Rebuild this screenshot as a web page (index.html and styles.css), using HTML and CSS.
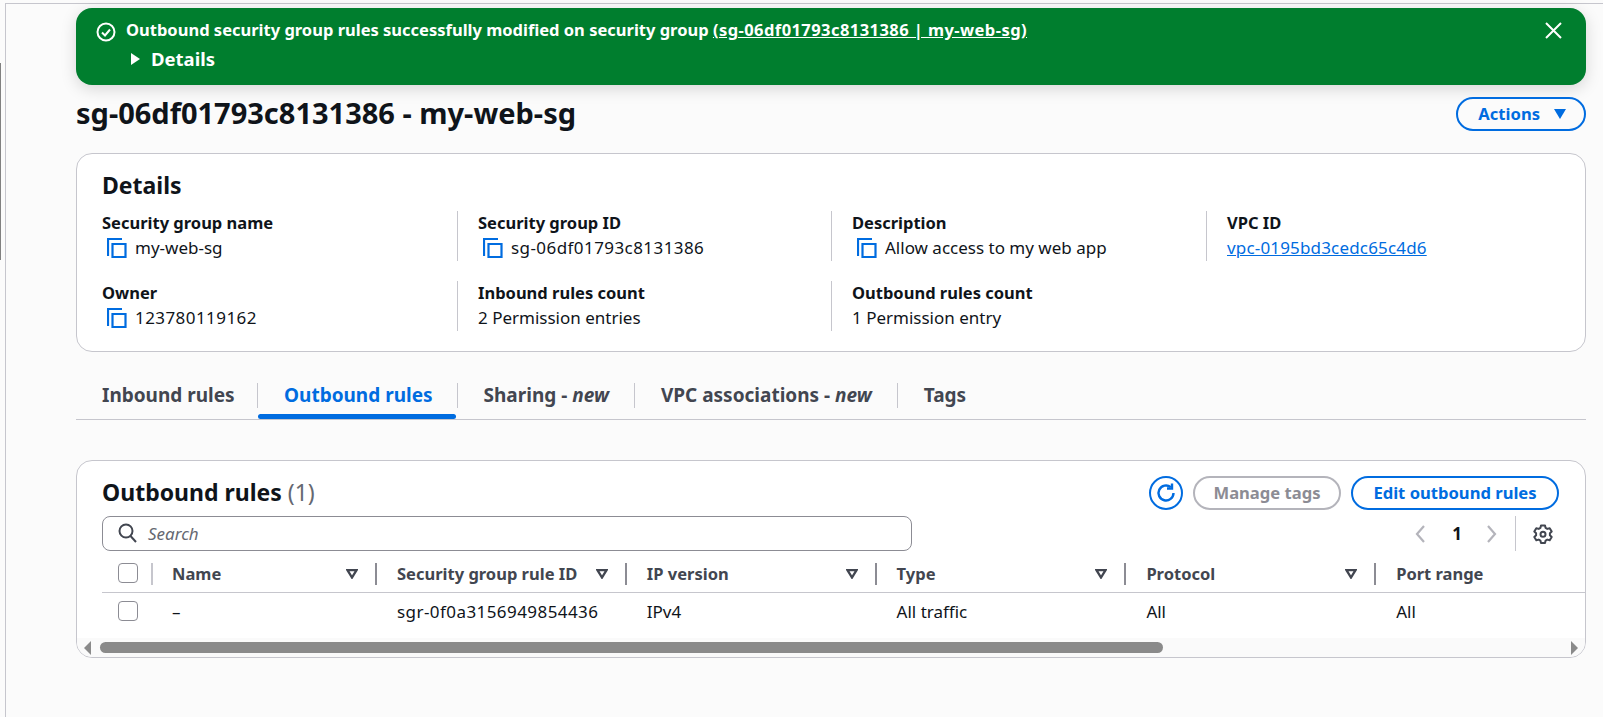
FILE: index.html
```html
<!DOCTYPE html>
<html lang="en">
<head>
  <meta charset="UTF-8">
  <title>sg-06df01793c8131386 - my-web-sg</title>
  <link rel="stylesheet" href="styles.css">
</head>
<body>
  <div class="edge-mark"></div>
  <div class="frame">
    <main class="content">
      <div class="flash">
        <svg class="flash-icon" width="20" height="20" viewBox="0 0 20 20"><circle cx="10" cy="10" r="8.500" fill="none" stroke="#fff" stroke-width="2"/><path d="M6 10.500l3 3 5-6" fill="none" stroke="#fff" stroke-width="2"/></svg>
        <div class="flash-body">
          <div class="flash-title">Outbound security group rules successfully modified on security group <a class="num" href="#">(sg-06df01793c8131386 | my-web-sg)</a></div>
          <div class="flash-details"><span class="caret-right"></span>Details</div>
        </div>
        <svg class="flash-close" width="17" height="17" viewBox="0 0 17 17"><path d="M1 1l15 15M16 1L1 16" fill="none" stroke="#fff" stroke-width="2"/></svg>
      </div>

      <div class="page-head">
        <h1>sg-06df01793c8131386 - my-web-sg</h1>
        <button class="btn btn-actions">Actions <span class="caret-down"></span></button>
      </div>

      <section class="card details">
        <h2>Details</h2>
        <div class="details-grid">
          <div class="field">
            <div class="label">Security group name</div>
            <div class="value"><svg class="copy" width="20" height="20" viewBox="0 0 20 20"><path d="M1 18V1h14M5.500 6h13v13h-13z" fill="none" stroke="#006ce0" stroke-width="2.200"/></svg>my-web-sg</div>
          </div>
          <div class="field">
            <div class="label">Security group ID</div>
            <div class="value"><svg class="copy" width="20" height="20" viewBox="0 0 20 20"><path d="M1 18V1h14M5.500 6h13v13h-13z" fill="none" stroke="#006ce0" stroke-width="2.200"/></svg><span class="num">sg-06df01793c8131386</span></div>
          </div>
          <div class="field">
            <div class="label">Description</div>
            <div class="value"><svg class="copy" width="20" height="20" viewBox="0 0 20 20"><path d="M1 18V1h14M5.500 6h13v13h-13z" fill="none" stroke="#006ce0" stroke-width="2.200"/></svg>Allow access to my web app</div>
          </div>
          <div class="field">
            <div class="label">VPC ID</div>
            <div class="value"><a href="#">vpc-0195bd3cedc65c4d6</a></div>
          </div>
          <div class="field">
            <div class="label">Owner</div>
            <div class="value"><svg class="copy" width="20" height="20" viewBox="0 0 20 20"><path d="M1 18V1h14M5.500 6h13v13h-13z" fill="none" stroke="#006ce0" stroke-width="2.200"/></svg><span class="num">123780119162</span></div>
          </div>
          <div class="field">
            <div class="label">Inbound rules count</div>
            <div class="value">2 Permission entries</div>
          </div>
          <div class="field">
            <div class="label">Outbound rules count</div>
            <div class="value">1 Permission entry</div>
          </div>
        </div>
      </section>

      <nav class="tabs">
        <a class="tab tab-inbound">Inbound rules</a>
        <a class="tab active">Outbound rules</a>
        <a class="tab">Sharing - <em>new</em></a>
        <a class="tab">VPC associations - <em>new</em></a>
        <a class="tab">Tags</a>
      </nav>

      <section class="card rules">
        <div class="rules-head">
          <h2>Outbound rules <span class="count">(1)</span></h2>
          <div class="rules-actions">
            <button class="btn btn-icon"><svg width="22" height="22" viewBox="0 0 22 22"><path d="M18.500 11a7.500 7.500 0 1 1-2.700-5.800" fill="none" stroke="#006ce0" stroke-width="2.400"/><path d="M17 1.500v5h-5" fill="none" stroke="#006ce0" stroke-width="2.400"/></svg></button>
            <button class="btn btn-disabled">Manage tags</button>
            <button class="btn btn-edit">Edit outbound rules</button>
          </div>
        </div>
        <div class="filter-row">
          <div class="search">
            <svg width="19" height="20" viewBox="0 0 19 20"><circle cx="8" cy="8" r="6.500" fill="none" stroke="#424650" stroke-width="2"/><path d="M12.500 13l5.500 6" fill="none" stroke="#424650" stroke-width="2"/></svg>
            <span>Search</span>
          </div>
          <div class="pager">
            <svg width="12" height="20" viewBox="0 0 12 20"><path d="M10 2L3 10l7 8" fill="none" stroke="#b4b4bb" stroke-width="2.200"/></svg>
            <span class="page-num">1</span>
            <svg width="12" height="20" viewBox="0 0 12 20"><path d="M2 2l7 8-7 8" fill="none" stroke="#b4b4bb" stroke-width="2.200"/></svg>
          </div>
          <div class="prefs">
            <svg width="20" height="20" viewBox="0 0 20 20"><path d="M8 1.500h4l.6 2.400 1.700 1 2.400-.7 2 3.400-1.800 1.700v1.900l1.800 1.700-2 3.400-2.400-.7-1.700 1-.6 2.400H8l-.6-2.400-1.700-1-2.400.7-2-3.400 1.800-1.700V9.300L1.300 7.600l2-3.400 2.400.7 1.700-1z" fill="none" stroke="#424650" stroke-width="2" stroke-linejoin="round"/><circle cx="10" cy="10.200" r="2.500" fill="none" stroke="#424650" stroke-width="2"/></svg>
          </div>
        </div>
        <div class="table-wrap">
          <table>
            <colgroup>
              <col class="col-check"><col class="col-name"><col class="col-wide"><col class="col-wide"><col class="col-wide"><col class="col-wide"><col class="col-wide">
            </colgroup>
            <thead>
              <tr>
                <th class="cell-check"><span class="checkbox"></span></th>
                <th><div class="th-in">Name<svg class="sort" width="12" height="10" viewBox="0 0 12 10"><path d="M1.500 1.200h9L6 8.500z" fill="#fff" stroke="#424650" stroke-width="2.300"/></svg></div></th>
                <th><div class="th-in">Security group rule ID<svg class="sort" width="12" height="10" viewBox="0 0 12 10"><path d="M1.500 1.200h9L6 8.500z" fill="#fff" stroke="#424650" stroke-width="2.300"/></svg></div></th>
                <th><div class="th-in">IP version<svg class="sort" width="12" height="10" viewBox="0 0 12 10"><path d="M1.500 1.200h9L6 8.500z" fill="#fff" stroke="#424650" stroke-width="2.300"/></svg></div></th>
                <th><div class="th-in">Type<svg class="sort" width="12" height="10" viewBox="0 0 12 10"><path d="M1.500 1.200h9L6 8.500z" fill="#fff" stroke="#424650" stroke-width="2.300"/></svg></div></th>
                <th><div class="th-in">Protocol<svg class="sort" width="12" height="10" viewBox="0 0 12 10"><path d="M1.500 1.200h9L6 8.500z" fill="#fff" stroke="#424650" stroke-width="2.300"/></svg></div></th>
                <th><div class="th-in">Port range</div></th>
              </tr>
            </thead>
            <tbody>
              <tr>
                <td class="cell-check"><span class="checkbox"></span></td>
                <td>–</td>
                <td><span class="num">sgr-0f0a3156949854436</span></td>
                <td>IPv4</td>
                <td>All traffic</td>
                <td>All</td>
                <td>All</td>
              </tr>
            </tbody>
          </table>
        </div>
        <div class="scrollbar">
          <span class="arrow-left"></span>
          <div class="track"><div class="thumb"></div></div>
          <span class="arrow-right"></span>
        </div>
      </section>
    </main>
  </div>
</body>
</html>
```
FILE: styles.css
```css
* {
  box-sizing: border-box;
}
html, body {
  margin: 0;
  height: 717px;
  overflow: hidden;
}
body {
  font-family: "Noto Sans", Arial, sans-serif;
  font-size: 17px;
  color: #0f141a;
  background-color: #fbfbfb;
  padding-top: 3px;
  position: relative;
}
.edge-mark {
  position: absolute;
  left: 0;
  top: 63px;
  width: 1px;
  height: 197px;
  background-color: #808080;
}
.frame {
  margin-left: 5px;
  height: 714px;
  border-left: 1px solid #c6c6cd;
  border-top: 1px solid #c6c6cd;
}
.content {
  margin-left: 70px;
  width: 1510px;
  padding-top: 4px;
}
a {
  color: inherit;
}
.num {
  letter-spacing: 0.43px;
}
.flash {
  display: flex;
  height: 77px;
  padding: 11px 24px 11px 20px;
  background-color: #007e2e;
  color: #fff;
  border-radius: 16px;
  box-shadow: 0 4px 16px rgba(0, 0, 0, 0.15);
  font-weight: 700;
}
.flash-icon {
  margin: 3px 10px 0 0;
  flex: none;
}
.flash-body {
  flex: 1;
}
.flash-title {
  font-size: 16.5px;
  line-height: 22px;
}
.flash-details {
  display: flex;
  align-items: center;
  font-size: 18.5px;
  line-height: 22px;
  margin-top: 7px;
}
.caret-right {
  width: 0;
  height: 0;
  margin: 0 11px 0 5px;
  border-left: 9px solid #fff;
  border-top: 6px solid transparent;
  border-bottom: 6px solid transparent;
}
.flash-close {
  margin-top: 3px;
}
.page-head {
  display: flex;
  align-items: center;
  justify-content: space-between;
  height: 68px;
  padding-bottom: 10px;
}
h1 {
  margin: 0 0 3px;
  font-size: 29px;
  font-weight: 700;
}
.btn {
  height: 34px;
  padding: 0 20px 2px;
  border: 2px solid #006ce0;
  border-radius: 17px;
  background-color: #fff;
  color: #006ce0;
  font-family: inherit;
  font-size: 16.6px;
  font-weight: 700;
}
.btn-actions {
  display: flex;
  align-items: center;
  gap: 14px;
  padding-right: 18px;
  background-color: #fbfbfb;
}
.caret-down {
  width: 0;
  height: 0;
  margin-top: 2px;
  border-top: 10px solid #006ce0;
  border-left: 6.5px solid transparent;
  border-right: 6.5px solid transparent;
}
.card {
  background-color: #fff;
  border: 1px solid #c6c6cd;
  border-radius: 16px;
}
.details {
  height: 199px;
  padding: 18px 25px;
}
h2 {
  margin: 0;
  font-size: 23px;
  line-height: 26px;
  font-weight: 700;
}
.details-grid {
  display: grid;
  grid-template-columns: 355px 374px 375px 1fr;
  grid-auto-rows: 50px;
  row-gap: 20px;
  margin-top: 13px;
}
.field {
  border-left: 1px solid #c6c6cd;
  padding-left: 20px;
}
.field:nth-child(4n+1) {
  border-left: none;
  padding-left: 0;
}
.label {
  font-size: 16.5px;
  font-weight: 700;
  line-height: 24px;
}
.value {
  display: flex;
  align-items: center;
  line-height: 26px;
}
.value a {
  color: #006ce0;
  letter-spacing: 0.17px;
}
.copy {
  margin: 0 8px 0 5px;
  flex: none;
}
.tabs {
  display: flex;
  margin-top: 30px;
  height: 38px;
  border-bottom: 1px solid #c6c6cd;
  font-size: 19px;
  font-weight: 700;
  color: #424650;
}
.tab {
  position: relative;
  padding: 0 25px 0 26px;
  height: 25px;
  margin-top: 1px;
  line-height: 25px;
  border-left: 1px solid #c6c6cd;
}
.tab-inbound {
  width: 181px;
  flex: none;
  padding: 0 0 0 26px;
  border-left: none;
}
.tab.active {
  padding-right: 24px;
  color: #006ce0;
}
.tab.active::after {
  content: "";
  position: absolute;
  left: 0;
  right: 1px;
  top: 31px;
  height: 5px;
  background-color: #006ce0;
  border-radius: 3px;
}
.rules {
  margin-top: 40px;
  height: 198px;
  overflow: hidden;
}
.rules-head {
  display: flex;
  justify-content: space-between;
  align-items: center;
  height: 34px;
  margin: 15px 26px 0 25px;
}
.rules-head h2 {
  margin-bottom: 2px;
}
.count {
  font-weight: 400;
  color: #656871;
}
.rules-actions {
  display: flex;
  gap: 10px;
}
.btn-icon {
  width: 34px;
  padding: 0;
  display: flex;
  align-items: center;
  justify-content: center;
}
.btn-disabled {
  width: 148px;
  padding: 0 0 2px;
  border-color: #b4b4bb;
  color: #8c8c94;
}
.btn-edit {
  width: 208px;
  padding: 0 0 2px;
}
.filter-row {
  display: flex;
  align-items: center;
  height: 35px;
  margin: 6px 26px 0 25px;
}
.search {
  display: flex;
  align-items: center;
  gap: 11px;
  width: 810px;
  height: 35px;
  padding: 0 0 1px 15px;
  border: 1px solid #8c8c94;
  border-radius: 8px;
  font-style: italic;
  color: #656871;
}
.pager {
  display: flex;
  align-items: center;
  gap: 24px;
  margin-left: auto;
}
.pager svg:first-child {
  margin-right: 2px;
}
.page-num {
  font-weight: 700;
}
.prefs {
  display: flex;
  align-items: center;
  height: 35px;
  margin-left: 17px;
  padding: 0 6px 0 17px;
  border-left: 1px solid #c6c6cd;
}
.table-wrap {
  margin: 10px 0 0 25px;
  height: 77px;
  overflow: hidden;
}
table {
  table-layout: fixed;
  border-collapse: separate;
  border-spacing: 0;
  width: 1524px;
}
.col-check {
  width: 49px;
}
.col-name {
  width: 226px;
}
.col-wide {
  width: 249.75px;
}
th {
  height: 32px;
  padding: 2px 0 0 0;
  vertical-align: top;
  text-align: left;
  border-bottom: 1px solid #c6c6cd;
  font-size: 16.5px;
  color: #424650;
  font-weight: 700;
}
.th-in {
  display: flex;
  align-items: center;
  justify-content: space-between;
  height: 22px;
  padding: 0 17px 2px 20px;
  border-right: 2px solid #8c8c94;
}
th:nth-child(2) .th-in {
  border-left: 2px solid #c6c6cd;
  padding-left: 19px;
}
th:last-child .th-in {
  border-right: none;
}
.sort {
  flex: none;
  margin-top: 2px;
}
.cell-check {
  padding-left: 16px;
}
.checkbox {
  display: block;
  width: 20px;
  height: 20px;
  border: 1px solid #8c8c94;
  border-radius: 4px;
  background-color: #fff;
}
td {
  height: 40px;
  padding: 0 0 4px 20px;
}
td:nth-child(2) {
  padding-left: 21px;
}
td.cell-check {
  padding: 0 0 4px 16px;
}
.scrollbar {
  display: flex;
  align-items: center;
  height: 19px;
  padding: 0 7px 0 7px;
  background-color: #fafafa;
}
.track {
  flex: 1;
  margin-left: 9px;
}
.thumb {
  width: 1063px;
  height: 11px;
  background-color: #8a8a8a;
  border-radius: 6px;
}
.arrow-left {
  border-right: 7px solid #8a8a8a;
  border-top: 7px solid transparent;
  border-bottom: 7px solid transparent;
}
.arrow-right {
  border-left: 7px solid #8a8a8a;
  border-top: 7px solid transparent;
  border-bottom: 7px solid transparent;
}
```
